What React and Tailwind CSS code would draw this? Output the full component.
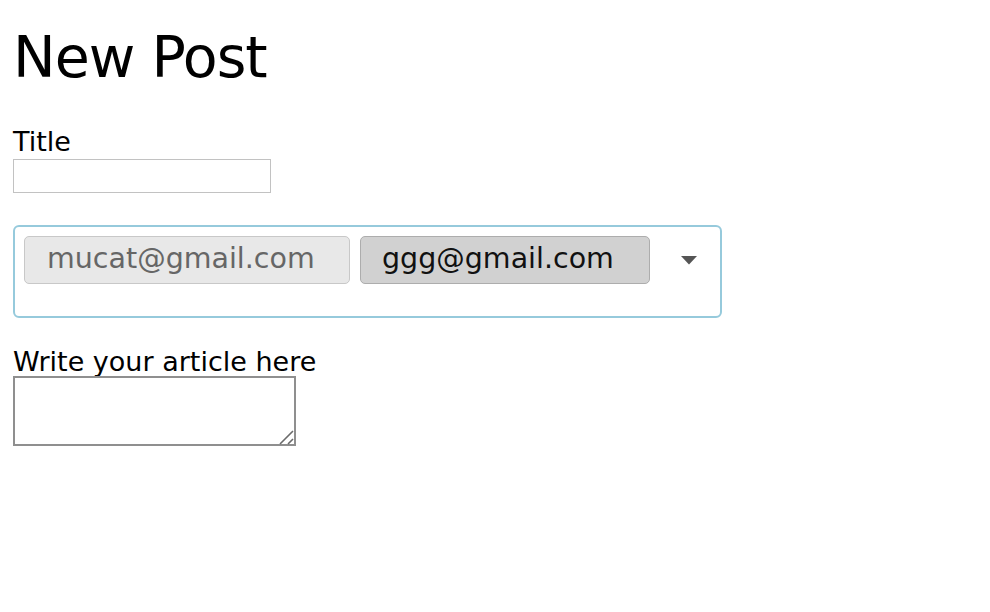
import React from "react";

export default function App() {
  return (
    <div className="min-h-[612px] bg-white px-[13px] pt-[29px] text-black" style={{ fontFamily: '"DejaVu Sans", sans-serif' }}>
      <h1 className="m-0 text-[57px] font-normal leading-[57px] tracking-[-1px]">New Post</h1>
      <label className="mt-[42px] block text-[27px] leading-[28px]">Title</label>
      <input type="text" className="mt-[3px] block h-[34px] w-[258px] border border-[#c2c2c2] bg-white outline-none" />
      <div className="mt-[32px] flex h-[93px] w-[709px] items-start rounded-[6px] border-2 border-[#96cadc] pl-[9px] pt-[9px]">
        <div className="flex items-start gap-[10px]">
          <div className="h-[48px] w-[326px] rounded-[5px] border border-[#c8c8c8] bg-[#e8e8e8] pl-[22px] pt-[4px] text-[28.5px] leading-[36px] text-[#666666]">
            mucat@gmail.com
          </div>
          <div className="h-[48px] w-[290px] rounded-[5px] border border-[#adadad] bg-[#d1d1d1] pl-[21px] pt-[4px] text-[28.5px] leading-[36px] text-[#111111]">
            ggg@gmail.com
          </div>
        </div>
        <svg className="ml-[31px] mt-[20px]" width="16" height="9" viewBox="0 0 16 9">
          <path d="M0 0 H16 L8 8.5 Z" fill="#555555" />
        </svg>
      </div>
      <label className="mt-[30px] block text-[27px] leading-[28px]">Write your article here</label>
      <div className="relative h-[70px] w-[283px]">
        <textarea className="block h-[70px] w-[283px] resize-none border-2 border-[#8f8f8f] bg-white outline-none" />
        <svg className="pointer-events-none absolute bottom-[1px] right-[2px]" width="16" height="16" viewBox="0 0 16 16">
          <path d="M2 15 L15 2 M10 15 L15 10" stroke="#6b6b6b" strokeWidth="1.6" fill="none" />
        </svg>
      </div>
    </div>
  );
}
